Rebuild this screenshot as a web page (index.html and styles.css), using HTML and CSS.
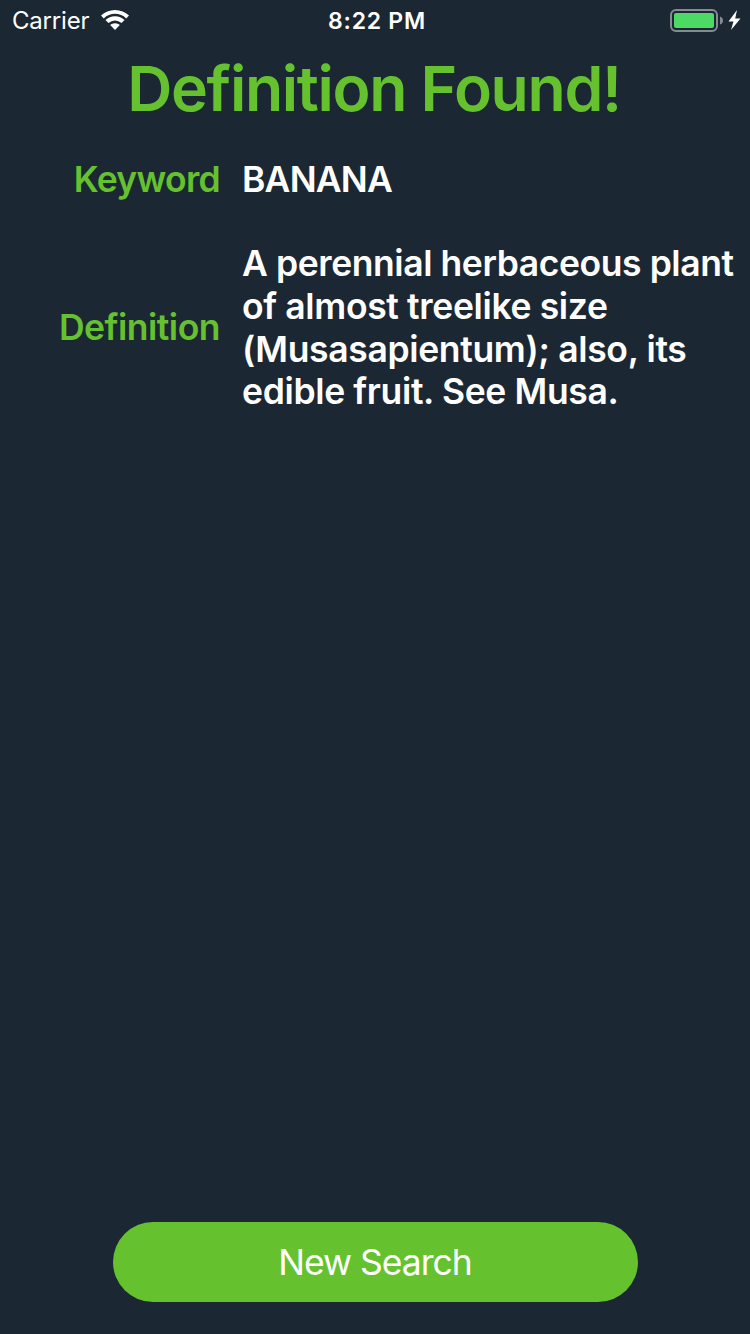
FILE: index.html
```html
<!DOCTYPE html>
<html lang="en">
<head>
<meta charset="utf-8">
<title>Definition Found</title>
<link rel="stylesheet" href="styles.css">
</head>
<body>
<div class="screen">
  <header class="status">
    <div class="status-left"><span class="carrier">Carrier</span>
      <svg class="wifi" width="28" height="20" viewBox="0 0 28 20" fill="#fff"><path d="M14 0C8.600 0 3.700 2.100 0 5.500L2.800 8.400A16 16 0 0 1 25.200 8.400L28 5.500C24.300 2.100 19.400 0 14 0Z"/><path d="M14 6.300C10.300 6.300 7 7.700 4.500 10L7.500 13A9.600 9.600 0 0 1 20.500 13L23.500 10C21 7.700 17.700 6.300 14 6.300Z"/><path d="M14 13.200C12.100 13.200 10.500 13.900 9.200 15L14 20L18.800 15C17.500 13.900 15.900 13.200 14 13.200Z"/></svg>
    </div>
    <span class="time">8:22 PM</span>
    <div class="status-right">
      <svg class="battery" width="72" height="24" viewBox="0 0 72 24"><rect x="1" y="1" width="46" height="21" rx="5" fill="none" stroke="#858b91" stroke-width="2"/><rect x="4" y="4" width="40" height="15" rx="2" fill="#4cd964"/><path d="M50 7.500Q53 8.500 53 11.500T50 15.500Z" fill="#858b91"/><path d="M67 1L58.500 12.500H63.500L61 21L70.500 9.500H65.200Z" fill="#fff"/></svg>
    </div>
  </header>
  <main class="content">
    <h1 class="title">Definition Found!</h1>
    <dl class="entry">
      <dt class="label keyword-label">Keyword</dt>
      <dd class="value keyword">BANANA</dd>
      <dt class="label definition-label">Definition</dt>
      <dd class="value definition"><span class="first-line">A perennial herbaceous plant</span><br>of almost treelike size<br>(Musasapientum); also, its<br>edible fruit. See Musa.</dd>
    </dl>
  </main>
  <footer class="footer"><button class="search">New Search</button></footer>
</div>
</body>
</html>
```
FILE: styles.css
```css
* { box-sizing: border-box; }
body { margin: 0; background: #1b2834; color: #fff; font-family: Inter, "Liberation Sans", sans-serif; }
.screen { height: 1334px; display: flex; flex-direction: column; }
.status { height: 40px; display: grid; grid-template-columns: 1fr auto 1fr; align-items: center; padding: 2px 8px 0 12px; font-size: 24px; line-height: 38px; }
.status-left { display: flex; align-items: center; gap: 12px; }
.carrier { letter-spacing: -0.2px; }
.wifi { margin-top: -2px; }
.status-right { display: flex; justify-content: flex-end; }
.time { font-size: 23px; font-weight: 560; letter-spacing: 0.75px; }
.content { flex: 1; }
.title { margin: 0; height: 96px; line-height: 96px; font-size: 62.5px; font-weight: 580; letter-spacing: -1.35px; color: #65c22e; text-align: center; padding-right: 2px; white-space: nowrap; }
.entry { display: grid; grid-template-columns: 220px 1fr; column-gap: 22px; row-gap: 41px; align-items: center; margin: 22px 0 0; font-size: 35.5px; font-weight: 600; line-height: 43px; white-space: nowrap; }
.label { color: #65c22e; text-align: right; }
.keyword-label { letter-spacing: -0.7px; }
.definition-label { letter-spacing: -0.5px; }
.value { margin: 0; }
.keyword { letter-spacing: -0.8px; }
.definition { padding-top: 1px; margin-bottom: -1px; line-height: 42.8px; letter-spacing: -0.35px; }
.first-line { letter-spacing: -0.42px; }
.footer { height: 112px; display: flex; justify-content: center; align-items: flex-start; }
.search { width: 525px; height: 80px; border: 0; border-radius: 40px; background: #65c22e; color: #fff; font: 400 35.5px/82px Inter, "Liberation Sans", sans-serif; letter-spacing: -1px; padding: 0; }
```
